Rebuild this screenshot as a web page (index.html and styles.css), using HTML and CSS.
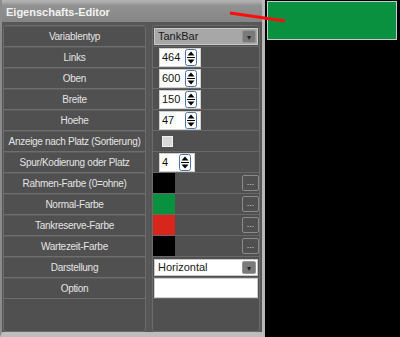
FILE: index.html
```html
<!DOCTYPE html>
<html lang="de">
  <head>
    <meta charset="UTF-8" />
    <title>Eigenschafts-Editor</title>
    <link rel="stylesheet" href="styles.css">
  </head>
  <body>
    <div class="screen">
      <div class="editor">
        <div class="title">Eigenschafts-Editor</div>
        <div class="grid">
          <div class="col labels">
            <div class="lab">Variablentyp</div>
            <div class="lab">Links</div>
            <div class="lab">Oben</div>
            <div class="lab">Breite</div>
            <div class="lab">Hoehe</div>
            <div class="lab">Anzeige nach Platz (Sortierung)</div>
            <div class="lab">Spur/Kodierung oder Platz</div>
            <div class="lab">Rahmen-Farbe (0=ohne)</div>
            <div class="lab">Normal-Farbe</div>
            <div class="lab">Tankreserve-Farbe</div>
            <div class="lab">Wartezeit-Farbe</div>
            <div class="lab">Darstellung</div>
            <div class="lab">Option</div>
          </div>
          <div class="col values">
            <div class="val">
              <div class="combo grey"><span>TankBar</span><i class="drop">&#9662;</i></div>
            </div>
            <div class="val pad">
              <div class="num"><span>464</span><svg class="spin" viewBox="0 0 12 17"><rect x="0.5" y="0.5" width="11" height="16" rx="2" fill="#fff" stroke="#4d74a8"/><line x1="2" y1="8.5" x2="10" y2="8.5" stroke="#000"/><path d="M6 2.5 L9.5 6.5 L2.5 6.5 Z M6 14.5 L9.5 10.5 L2.5 10.5 Z" fill="#000"/></svg></div>
            </div>
            <div class="val pad">
              <div class="num"><span>600</span><svg class="spin" viewBox="0 0 12 17"><rect x="0.5" y="0.5" width="11" height="16" rx="2" fill="#fff" stroke="#4d74a8"/><line x1="2" y1="8.5" x2="10" y2="8.5" stroke="#000"/><path d="M6 2.5 L9.5 6.5 L2.5 6.5 Z M6 14.5 L9.5 10.5 L2.5 10.5 Z" fill="#000"/></svg></div>
            </div>
            <div class="val pad">
              <div class="num"><span>150</span><svg class="spin" viewBox="0 0 12 17"><rect x="0.5" y="0.5" width="11" height="16" rx="2" fill="#fff" stroke="#4d74a8"/><line x1="2" y1="8.5" x2="10" y2="8.5" stroke="#000"/><path d="M6 2.5 L9.5 6.5 L2.5 6.5 Z M6 14.5 L9.5 10.5 L2.5 10.5 Z" fill="#000"/></svg></div>
            </div>
            <div class="val pad">
              <div class="num"><span>47</span><svg class="spin" viewBox="0 0 12 17"><rect x="0.5" y="0.5" width="11" height="16" rx="2" fill="#fff" stroke="#4d74a8"/><line x1="2" y1="8.5" x2="10" y2="8.5" stroke="#000"/><path d="M6 2.5 L9.5 6.5 L2.5 6.5 Z M6 14.5 L9.5 10.5 L2.5 10.5 Z" fill="#000"/></svg></div>
            </div>
            <div class="val pad">
              <div class="check"></div>
            </div>
            <div class="val pad">
              <div class="num small"><span>4</span><svg class="spin" viewBox="0 0 12 17"><rect x="0.5" y="0.5" width="11" height="16" rx="2" fill="#fff" stroke="#4d74a8"/><line x1="2" y1="8.5" x2="10" y2="8.5" stroke="#000"/><path d="M6 2.5 L9.5 6.5 L2.5 6.5 Z M6 14.5 L9.5 10.5 L2.5 10.5 Z" fill="#000"/></svg></div>
            </div>
            <div class="val">
              <div class="swatch black"></div><div class="dots">...</div>
            </div>
            <div class="val">
              <div class="swatch green"></div><div class="dots">...</div>
            </div>
            <div class="val">
              <div class="swatch red"></div><div class="dots">...</div>
            </div>
            <div class="val">
              <div class="swatch black"></div><div class="dots">...</div>
            </div>
            <div class="val">
              <div class="combo white"><span>Horizontal</span><i class="drop">&#9662;</i></div>
            </div>
            <div class="val">
              <div class="field"></div>
            </div>
          </div>
        </div>
      </div>
      <div class="canvas">
        <div class="bar"></div>
      </div>
      <svg class="marker" width="400" height="40" viewBox="0 0 400 40">
        <line x1="230" y1="13" x2="285" y2="21" stroke="#ff0d0d" stroke-width="3" />
      </svg>
    </div>
  </body>
</html>
```

FILE: styles.css
```css
body {
  margin: 0;
  background-color: #000;
  font-family: "Liberation Sans", Arial, sans-serif;
}
.screen {
  position: relative;
  display: flex;
  width: 400px;
  height: 337px;
  overflow: hidden;
}
.editor {
  width: 260px;
  height: 332px;
  display: flex;
  flex-direction: column;
  background-color: #575757;
  border-left: 2px solid #8c8c8c;
  border-right: 3px solid #b9b9b9;
  border-bottom: 5px solid #bdbdbd;
}
.title {
  height: 22px;
  line-height: 24px;
  padding-left: 4px;
  font-size: 11px;
  font-weight: bold;
  color: #f2f2f2;
  background: linear-gradient(#b4b4b4 0, #a6a6a6 3px, #929292 5px, #858585 100%);
}
.grid {
  flex: 1;
  display: flex;
  gap: 6px;
  padding: 3px 0 0 1px;
}
.col {
  display: flex;
  flex-direction: column;
  border: 1px solid #6b6b6b;
  border-radius: 3px;
  background-color: #505050;
}
.labels {
  width: 141px;
}
.values {
  width: 106px;
}
.lab {
  height: 19px;
  line-height: 19px;
  border-top: 1px solid #5c5c5c;
  border-bottom: 1px solid #6e6e6e;
  text-align: center;
  font-size: 10px;
  letter-spacing: -0.3px;
  color: #e4e4e4;
  white-space: nowrap;
}
.val {
  height: 21px;
  display: flex;
  align-items: center;
  border-bottom: 1px solid #686868;
  box-sizing: border-box;
  height: 21px;
}
.pad {
  padding-left: 6px;
}
.combo {
  flex: 1;
  height: 17px;
  margin: 0 1px;
  display: flex;
  align-items: center;
  justify-content: space-between;
  padding-left: 3px;
  font-size: 11px;
  color: #1a1a1a;
  box-sizing: border-box;
  border: 1px solid #c8c8c8;
}
.combo.grey {
  background-color: #a7a7a7;
}
.combo.white {
  background-color: #fff;
}
.drop {
  width: 14px;
  height: 13px;
  margin-right: 1px;
  font-style: normal;
  font-size: 8px;
  line-height: 13px;
  text-align: center;
  color: #222;
  background-color: #7a7a7a;
  border: 1px solid #959595;
  border-radius: 2px;
  box-sizing: border-box;
}
.num {
  width: 42px;
  height: 19px;
  display: flex;
  align-items: center;
  justify-content: space-between;
  padding: 0 3px 0 2px;
  box-sizing: border-box;
  background-color: #fff;
  border: 1px solid #d0d0d0;
  font-size: 11px;
  color: #111;
}
.num.small {
  width: 36px;
}
.spin {
  width: 12px;
  height: 17px;
}
.check {
  width: 9px;
  height: 9px;
  margin-left: 3px;
  background-color: #d8d8d8;
  border: 1px solid #f0f0f0;
}
.swatch {
  width: 22px;
  align-self: stretch;
}
.black {
  background-color: #000;
}
.green {
  background-color: #0a9140;
}
.red {
  background-color: #d9261d;
}
.dots {
  width: 17px;
  height: 16px;
  margin-left: auto;
  line-height: 12px;
  text-align: center;
  font-size: 9px;
  color: #d8d8d8;
  border: 1px solid #8a8a8a;
  border-radius: 2px;
  box-sizing: border-box;
}
.field {
  flex: 1;
  height: 18px;
  margin: 0 1px;
  background-color: #fff;
  border: 1px solid #cfcfcf;
}
.canvas {
  flex: 1;
  padding: 1px 3px 0 2px;
}
.bar {
  height: 39px;
  background-color: #0a9140;
  border: 1px solid #c3ccd6;
  box-sizing: border-box;
}
.marker {
  position: absolute;
  left: 0;
  top: 0;
}
```
